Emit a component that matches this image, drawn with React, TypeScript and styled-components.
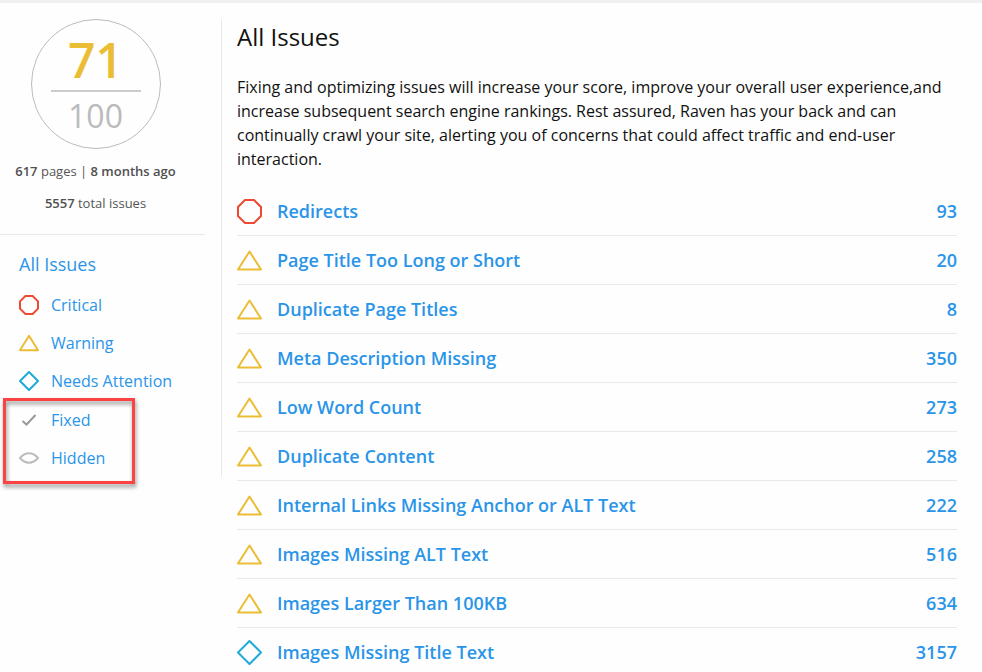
import React from "react";
import styled, { createGlobalStyle } from "styled-components";

const GlobalStyle = createGlobalStyle`
  *, *::before, *::after { box-sizing: border-box; }
  body {
    margin: 0;
    background: #fefefe;
    color: #111;
    font-family: "Open Sans", "Noto Sans", sans-serif;
    font-size: 16px;
    line-height: 24px;
  }
`;

const Page = styled.div`
  display: flex;
  align-items: flex-start;
  border-top: 3px solid #f0f0f0;
  padding-top: 16px;
`;

const Sidebar = styled.aside`
  flex: none;
  width: 222px;
  padding-right: 16px;
  border-right: 1px solid #e9e9e9;
`;

const Summary = styled.section`
  display: flex;
  flex-direction: column;
  align-items: center;
  padding: 0 14px 19px 0;
  border-bottom: 1px solid #e9e9e9;
`;

const ScoreCircle = styled.div`
  display: flex;
  flex-direction: column;
  align-items: center;
  width: 130px;
  height: 130px;
  margin-bottom: 10px;
  padding-top: 16px;
  border: 1px solid #bbb;
  border-radius: 50%;
`;

const Score = styled.strong`
  width: 90px;
  height: 56px;
  border-bottom: 2px solid #ccc;
  color: #ebbd35;
  font-size: 48px;
  font-weight: 600;
  line-height: 48px;
  text-align: center;
`;

const ScoreMax = styled.span`
  color: #bbb;
  font-size: 32px;
  line-height: 48px;
`;

const Stat = styled.p`
  margin: 0 0 8px;
  color: #555;
  font-size: 13px;
  line-height: 24px;
  white-space: nowrap;

  b { font-weight: 600; color: #505050; }
  &:last-child { margin-bottom: 0; }
`;

const Filters = styled.nav`
  display: flex;
  flex-direction: column;
  align-items: flex-start;
  padding: 17px 0 0 19px;
`;

const AllLink = styled.a`
  margin-bottom: 10px;
  color: #2a95e8;
  font-size: 18px;
  text-decoration: none;
`;

const FilterLink = styled.a`
  display: flex;
  align-items: center;
  gap: 12px;
  height: 38px;
  color: #2a95e8;
  text-decoration: none;
`;

const Highlighted = styled.div`
  position: relative;
  padding-top: 1px;

  &::after {
    content: "";
    position: absolute;
    inset: -2px -30px -7px -16px;
    border: 3px solid #fb4343;
    filter: drop-shadow(1px 3px 2px rgba(0, 0, 0, 0.45));
    pointer-events: none;
  }
`;

const Main = styled.main`
  flex: 1;
  min-width: 0;
  padding: 0 25px 0 15px;
`;

const Title = styled.h1`
  margin: 0 0 20px;
  font-size: 24px;
  font-weight: 400;
  line-height: 36px;
`;

const Intro = styled.p`
  margin: 0 0 16px;
`;

const IssueList = styled.ul`
  margin: 0;
  padding: 0;
  list-style: none;
`;

const IssueItem = styled.li`
  border-bottom: 1px solid #e9e9e9;
  &:last-child { border-bottom: 0; }
`;

const IssueLink = styled.a`
  display: flex;
  align-items: center;
  gap: 15px;
  height: 48px;
  color: #2a95e8;
  font-size: 18px;
  font-weight: 600;
  text-decoration: none;
`;

const IssueCount = styled.span`
  margin-left: auto;
`;

const IconSvg = styled.svg`
  flex: none;
  display: block;
`;

type Kind = "critical" | "warning" | "attention" | "fixed" | "hidden";

const Icon = ({ kind, size = 20 }: { kind: Kind; size?: number }) => (
  <IconSvg width={size} height={size} viewBox={`0 0 ${size} ${size}`} fill="none" strokeWidth="2" aria-hidden="true">
    {kind === "critical" && (
      <path
        stroke="#ee4a33"
        d={`M${size * 0.32} 1H${size * 0.68}L${size - 1} ${size * 0.32}V${size * 0.68}L${size * 0.68} ${size - 1}H${size * 0.32}L1 ${size * 0.68}V${size * 0.32}Z`}
      />
    )}
    {kind === "warning" && (
      <path
        stroke="#ebbd35"
        strokeLinejoin="round"
        d={`M${size / 2} ${size * 0.14}L${size - 1} ${size * 0.86}H1Z`}
      />
    )}
    {kind === "attention" && (
      <path
        stroke="#1fabda"
        strokeLinejoin="round"
        d={`M${size / 2} 1L${size - 1} ${size / 2}L${size / 2} ${size - 1}L1 ${size / 2}Z`}
      />
    )}
    {kind === "fixed" && <path stroke="#999" d="M3.5 11L7.5 14.5L16.5 5" />}
    {kind === "hidden" && (
      <path stroke="#bbb" strokeLinejoin="round" d="M1 10C6.5 3.7 13.5 3.7 19 10C13.5 16.3 6.5 16.3 1 10Z" />
    )}
  </IconSvg>
);

const Filter = ({ kind, children }: { kind: Kind; children: React.ReactNode }) => (
  <FilterLink href="#">
    <Icon kind={kind} />
    {children}
  </FilterLink>
);

const issues: { kind: Kind; name: string; count: number }[] = [
  { kind: "critical", name: "Redirects", count: 93 },
  { kind: "warning", name: "Page Title Too Long or Short", count: 20 },
  { kind: "warning", name: "Duplicate Page Titles", count: 8 },
  { kind: "warning", name: "Meta Description Missing", count: 350 },
  { kind: "warning", name: "Low Word Count", count: 273 },
  { kind: "warning", name: "Duplicate Content", count: 258 },
  { kind: "warning", name: "Internal Links Missing Anchor or ALT Text", count: 222 },
  { kind: "warning", name: "Images Missing ALT Text", count: 516 },
  { kind: "warning", name: "Images Larger Than 100KB", count: 634 },
  { kind: "attention", name: "Images Missing Title Text", count: 3157 },
];

export default function App() {
  return (
    <>
      <GlobalStyle />
      <Page>
        <Sidebar>
          <Summary>
            <ScoreCircle>
              <Score>71</Score>
              <ScoreMax>100</ScoreMax>
            </ScoreCircle>
            <Stat>
              <b>617</b> pages | <b>8 months ago</b>
            </Stat>
            <Stat>
              <b>5557</b> total issues
            </Stat>
          </Summary>
          <Filters aria-label="Issue filters">
            <AllLink href="#">All Issues</AllLink>
            <Filter kind="critical">Critical</Filter>
            <Filter kind="warning">Warning</Filter>
            <Filter kind="attention">Needs Attention</Filter>
            <Highlighted>
              <Filter kind="fixed">Fixed</Filter>
              <Filter kind="hidden">Hidden</Filter>
            </Highlighted>
          </Filters>
        </Sidebar>
        <Main>
          <Title>All Issues</Title>
          <Intro>
            Fixing and optimizing issues will increase your score, improve your overall user experience,and increase
            subsequent search engine rankings. Rest assured, Raven has your back and can continually crawl your site,
            alerting you of concerns that could affect traffic and end-user interaction.
          </Intro>
          <IssueList>
            {issues.map((issue) => (
              <IssueItem key={issue.name}>
                <IssueLink href="#">
                  <Icon kind={issue.kind} size={25} />
                  {issue.name}
                  <IssueCount>{issue.count}</IssueCount>
                </IssueLink>
              </IssueItem>
            ))}
          </IssueList>
        </Main>
      </Page>
    </>
  );
}
